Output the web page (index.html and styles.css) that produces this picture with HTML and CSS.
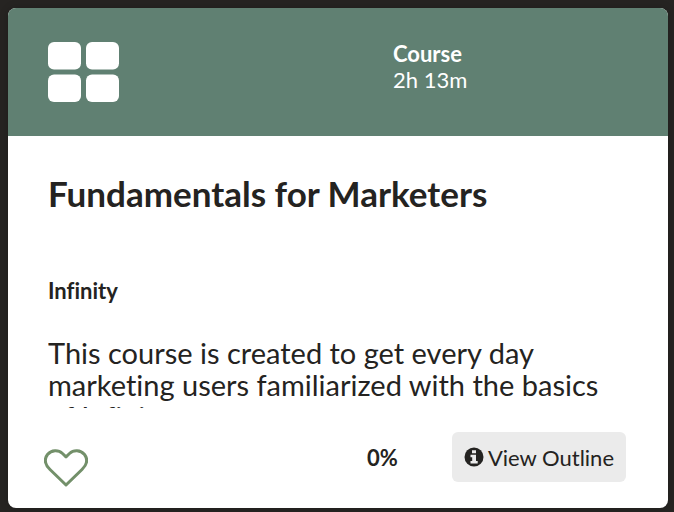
FILE: index.html
```html
<!DOCTYPE html>
<html lang="en">
<head>
<meta charset="utf-8">
<meta name="viewport" content="width=device-width, initial-scale=1">
<title>Fundamentals for Marketers</title>
<link rel="stylesheet" href="styles.css">
</head>
<body>
<article class="card">
  <header class="card-header">
    <svg class="grid-icon" viewBox="0 0 72 60" aria-hidden="true">
      <rect x="0" y="0" width="33" height="27.500" rx="6"/>
      <rect x="38" y="0" width="33" height="27.500" rx="6"/>
      <rect x="0" y="32.500" width="33" height="27.500" rx="6"/>
      <rect x="38" y="32.500" width="33" height="27.500" rx="6"/>
    </svg>
    <div class="meta">
      <strong class="meta-type">Course</strong>
      <span>2h 13m</span>
    </div>
  </header>
  <div class="card-body">
    <h2 class="title">Fundamentals for Marketers</h2>
    <p class="product">Infinity</p>
    <p class="description">This course is created to get every day marketing users familiarized with the basics of Infinity.</p>
  </div>
  <footer class="card-footer">
    <button class="favorite" type="button" aria-label="Add to favorites">
      <svg class="heart-icon" viewBox="0 0 44 38" aria-hidden="true">
        <path d="M22 36 L6 20.500 C.500 15 .500 9.500 3.500 5.500 C7.500 .700 14.500 .700 18.500 4.500 L22 7.800 L25.500 4.500 C29.500 .700 36.500 .700 40.500 5.500 C43.500 9.500 43.500 15 38 20.500 Z"/>
      </svg>
    </button>
    <strong class="progress">0%</strong>
    <button class="outline-button" type="button">
      <svg class="info-icon" viewBox="0 0 20 20" aria-hidden="true">
        <circle cx="10" cy="10" r="9.500"/>
        <path d="M8 3.200h4v3H8zM6.500 7.800H12v6.200h1.700v2.500H6.500V14h1.700v-3.700H6.500z"/>
      </svg>
      View Outline
    </button>
  </footer>
</article>
</body>
</html>
```
FILE: styles.css
```css
* {
  box-sizing: border-box;
}

body {
  margin: 0;
  padding: 8px 6px 4px 8px;
  background: #262422;
  color: #242321;
  font-family: Lato, "Noto Sans", sans-serif;
  font-variant-ligatures: none;
}

.card {
  overflow: hidden;
  border-radius: 8px;
  background: #fff;
  box-shadow: 0 0 8px rgba(0, 0, 0, 0.2);
}

.card-header {
  display: grid;
  grid-template-columns: 345px 1fr;
  align-items: center;
  height: 128px;
  padding: 0 40px;
  background: #608072;
  color: #fff;
}

.grid-icon {
  width: 72px;
  height: 60px;
  fill: #fff;
}

.meta {
  display: flex;
  flex-direction: column;
  padding-bottom: 10px;
  font-size: 22px;
  line-height: 26px;
}

.meta-type {
  font-weight: 700;
}

.card-body {
  padding: 35px 40px 0;
}

.title,
.product,
.description {
  margin: 0;
}

.title {
  font-size: 35px;
  font-weight: 700;
  line-height: 44px;
}

.product {
  margin-top: 63px;
  font-size: 22px;
  font-weight: 700;
  line-height: 26px;
}

.description {
  height: 71px;
  margin-top: 33px;
  overflow: hidden;
  font-size: 29px;
  line-height: 32px;
}

.card-footer {
  display: flex;
  align-items: flex-start;
  padding: 24px 42px 21px 36px;
}

.favorite {
  display: flex;
  margin-top: 17px;
  padding: 0;
  border: 0;
  background: none;
}

.heart-icon {
  width: 44px;
  height: 38px;
  fill: none;
  stroke: #73906a;
  stroke-width: 3;
  stroke-linejoin: round;
}

.progress {
  margin-left: auto;
  font-size: 22px;
  font-weight: 700;
  line-height: 52px;
}

.outline-button {
  display: flex;
  align-items: center;
  gap: 4px;
  height: 50px;
  margin-left: 54px;
  padding: 0 12px;
  border: 0;
  border-radius: 6px;
  background: #ebebeb;
  color: inherit;
  font: inherit;
  font-size: 22px;
}

.info-icon {
  width: 20px;
  height: 20px;
  fill: #242321;
}

.info-icon path {
  fill: #ebebeb;
}
```
